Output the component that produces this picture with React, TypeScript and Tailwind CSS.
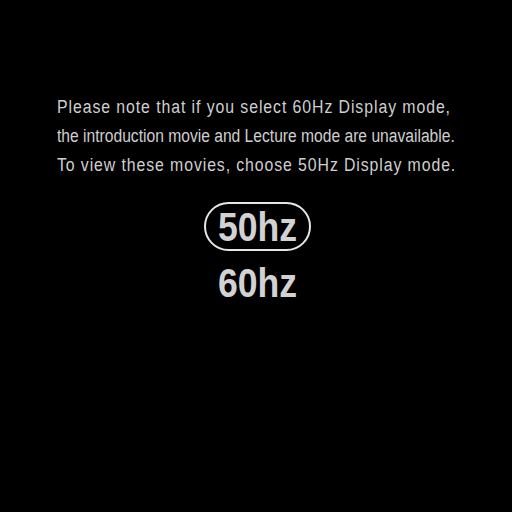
export default function App() {
  return (
    <div
      className="flex h-[512px] w-[512px] flex-col items-start bg-black pt-[93px] text-[#cfcfcf]"
      style={{ fontFamily: '"Liberation Sans", Arial, sans-serif' }}
    >
      {/* Notice */}
      <div className="pl-[57px] text-[18px] leading-[29px]">
        <div className="origin-left scale-x-[0.88] whitespace-nowrap tracking-[1.05px]">
          Please note that if you select 60Hz Display mode,
        </div>
        <div className="origin-left scale-x-[0.868] whitespace-nowrap">
          the introduction movie and Lecture mode are unavailable.
        </div>
        <div className="origin-left scale-x-[0.88] whitespace-nowrap tracking-[1.03px]">
          To view these movies, choose 50Hz Display mode.
        </div>
      </div>

      {/* Options */}
      <div className="mt-[22px] flex w-full flex-col items-center pl-[2px]">
        <div className="flex h-[49px] w-[107px] items-center justify-center rounded-full border-2 border-[#e6e6e6]">
          <span className="scale-x-[0.89] text-[40px] font-bold leading-none text-[#d2d2d2]">
            50hz
          </span>
        </div>
        <div className="mt-[7px] flex h-[49px] items-center justify-center">
          <span className="scale-x-[0.89] text-[40px] font-bold leading-none text-[#d2d2d2]">
            60hz
          </span>
        </div>
      </div>
    </div>
  );
}
